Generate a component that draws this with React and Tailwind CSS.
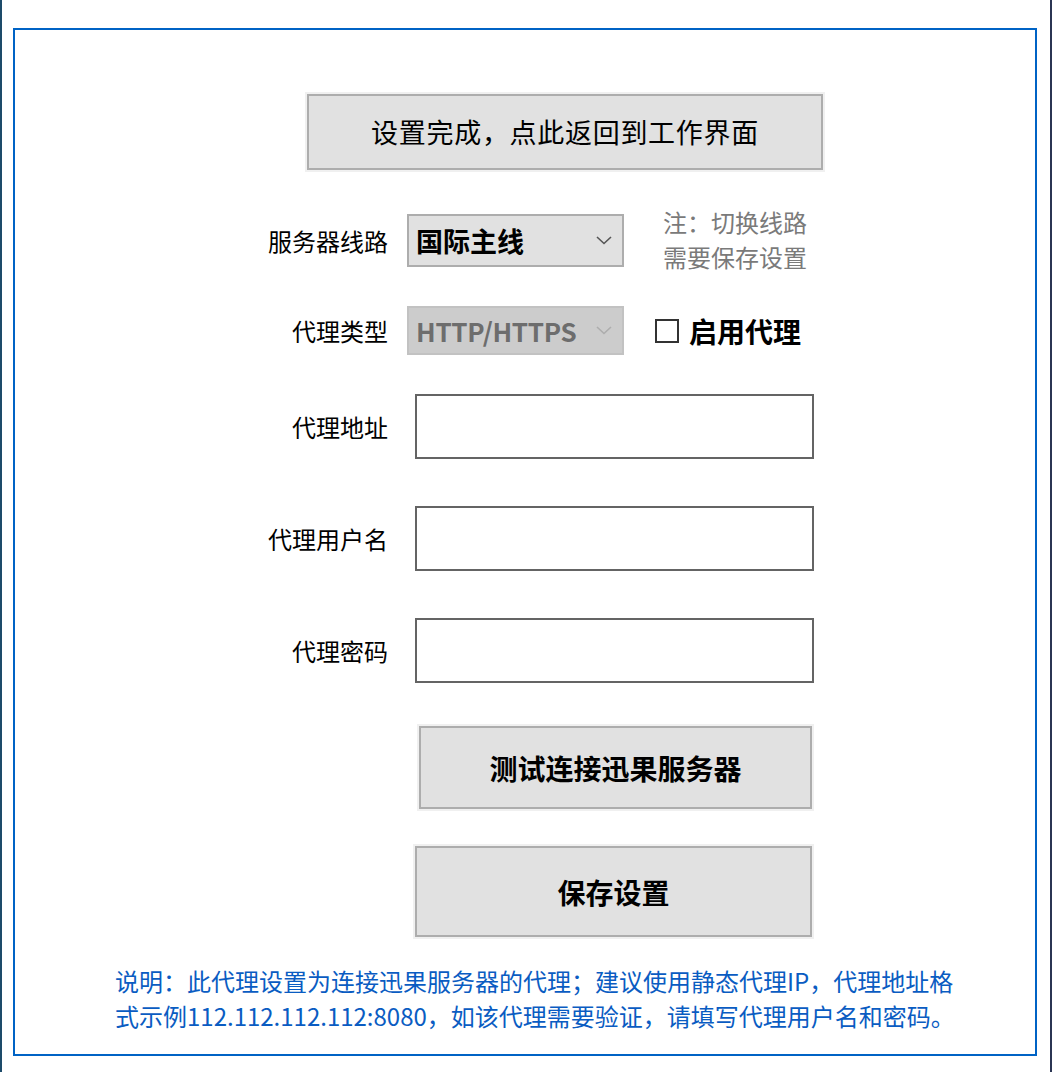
const cjk = { fontFamily: '"Noto Sans CJK SC", "Noto Sans", sans-serif' }

// thin down-arrow used by the combo boxes
const Chevron = ({ color }) => (
  <svg width="16" height="9" viewBox="0 0 16 9" fill="none">
    <polyline points="1,1 8,7.5 15,1" stroke={color} strokeWidth="1.6" />
  </svg>
)

const Label = ({ children }) => (
  <div className="w-[373px] shrink-0 text-right text-[24px] leading-none text-black">{children}</div>
)

const Field = () => (
  <div className="ml-[27px] h-full w-[399px] border-2 border-[#646464] bg-white" />
)

const GrayButton = ({ className, children }) => (
  <button
    className={
      'flex items-center justify-center border-2 border-[#adadad] bg-[#e1e1e1] text-black shadow-[0_0_0_2px_#f0f0f0] ' +
      className
    }
  >
    {children}
  </button>
)

export default function App() {
  return (
    <div
      className="relative h-[1072px] w-[1052px] overflow-hidden border-l-2 border-r-2 border-l-[#1d4b6a] border-r-[#2b3553] bg-white"
      style={cjk}
    >
      <div className="ml-[11px] mt-[28px] flex h-[1028px] w-[1024px] flex-col border-2 border-[#0063c5]">
        <GrayButton className="ml-[292px] mt-[64px] h-[76px] w-[516px] text-[27px] tracking-[0.7px]">
          设置完成，点此返回到工作界面
        </GrayButton>

        {/* 服务器线路 */}
        <div className="mt-[44px] flex h-[53px] items-center">
          <Label>服务器线路</Label>
          <div className="ml-[19px] flex h-full w-[217px] items-center justify-between border-2 border-[#adadad] bg-[#e1e1e1] pl-[7px] pr-[10px]">
            <span className="text-[27px] font-bold leading-none">国际主线</span>
            <Chevron color="#555" />
          </div>
          <div className="ml-[39px] -mt-[4px] text-[24px] leading-[35px] text-[#7a7a7a]">
            <div>注：切换线路</div>
            <div>需要保存设置</div>
          </div>
        </div>

        {/* 代理类型 */}
        <div className="mt-[39px] flex h-[49px] items-center">
          <Label>代理类型</Label>
          <div className="ml-[19px] flex h-full w-[217px] items-center justify-between border-2 border-[#c2c2c2] bg-[#cccccc] pl-[7px] pr-[10px]">
            <span className="text-[26px] font-bold leading-none tracking-[-0.3px] text-[#6d6d6d]">HTTP/HTTPS</span>
            <Chevron color="#adadad" />
          </div>
          <div className="ml-[31px] h-[24px] w-[24px] border-2 border-[#333] bg-white" />
          <span className="ml-[10px] text-[28px] font-bold leading-none">启用代理</span>
        </div>

        <div className="mt-[39px] flex h-[65px] items-center">
          <Label>代理地址</Label>
          <Field />
        </div>
        <div className="mt-[47px] flex h-[65px] items-center">
          <Label>代理用户名</Label>
          <Field />
        </div>
        <div className="mt-[47px] flex h-[65px] items-center">
          <Label>代理密码</Label>
          <Field />
        </div>

        <GrayButton className="ml-[404px] mt-[43px] h-[83px] w-[393px] text-[28px] font-bold">
          测试连接迅果服务器
        </GrayButton>
        <GrayButton className="ml-[400px] mt-[37px] h-[91px] w-[397px] text-[28px] font-bold">
          保存设置
        </GrayButton>

        <p className="ml-[100px] mt-[26px] w-[860px] text-[24px] leading-[35px] text-[#0a5cc2]">
          说明：此代理设置为连接迅果服务器的代理；建议使用静态代理IP，代理地址格
          <br />
          式示例112.112.112.112:8080，如该代理需要验证，请填写代理用户名和密码。
        </p>
      </div>
    </div>
  )
}
